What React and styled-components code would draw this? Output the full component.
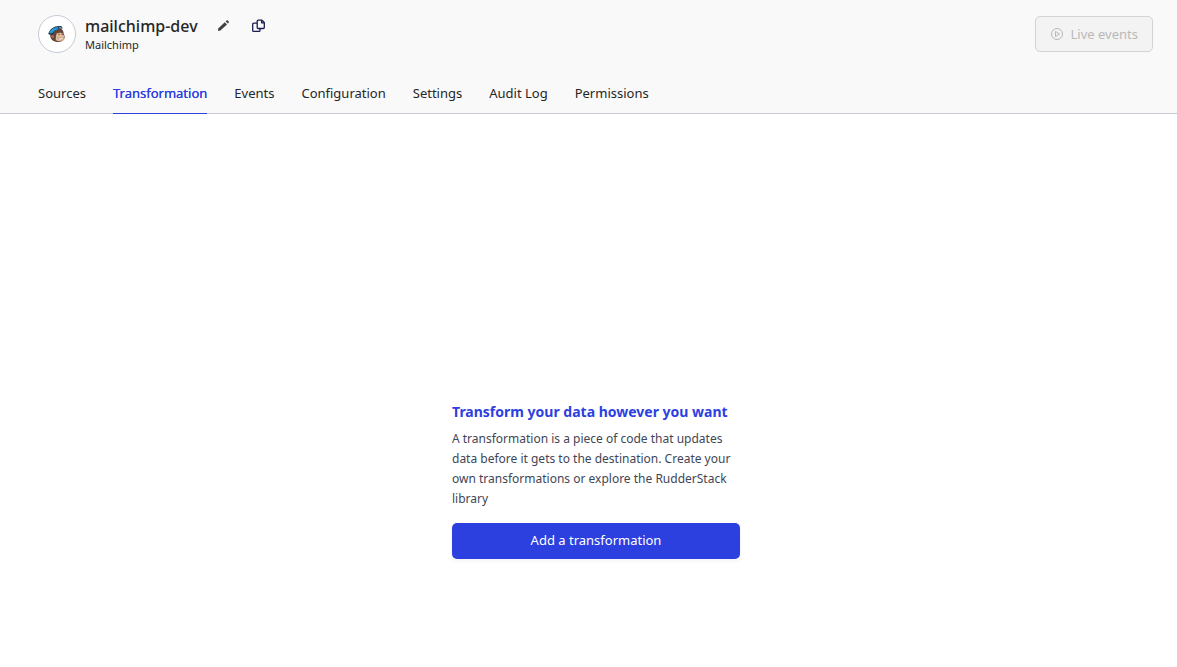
import React from "react";
import styled, { createGlobalStyle } from "styled-components";

const GlobalStyle = createGlobalStyle`
  *, *::before, *::after { box-sizing: border-box; }
  body {
    margin: 0;
    background: #ffffff;
    color: #262626;
    font-family: "Noto Sans", sans-serif;
  }
  button { font-family: inherit; }
`;

const Page = styled.div`
  min-height: 100vh;
  display: flex;
  flex-direction: column;
`;

const Header = styled.header`
  background: #f9f9f9;
  border-bottom: 1px solid #c4c9d2;
`;

const TitleBar = styled.div`
  display: flex;
  align-items: center;
  justify-content: space-between;
  padding: 15px 24px 0 38px;
`;

const Identity = styled.div`
  display: flex;
  align-items: center;
  gap: 9px;
`;

const Avatar = styled.div`
  width: 38px;
  height: 38px;
  display: flex;
  align-items: center;
  justify-content: center;
  background: #ffffff;
  border: 1px solid #c4cbd8;
  border-radius: 50%;
`;

const NameRow = styled.div`
  display: flex;
  align-items: center;
`;

const Name = styled.h1`
  margin: 0 19px 0 0;
  font-size: 16px;
  font-weight: 500;
  line-height: 22px;
`;

const Kind = styled.p`
  margin: 0;
  font-size: 11px;
  line-height: 16px;
`;

const IconButton = styled.button`
  display: flex;
  padding: 0;
  margin-right: 20px;
  border: 0;
  background: none;
  color: ${(p) => p.$color};
  cursor: pointer;
`;

const Button = styled.button`
  display: flex;
  align-items: center;
  justify-content: center;
  gap: 7px;
  height: 36px;
  padding: 0 14px;
  border-radius: 5px;
  font-size: 13px;
  line-height: 20px;
`;

const LiveButton = styled(Button)`
  border: 1px solid #d3d3d3;
  background: #f3f3f3;
  color: #b9b9b9;
`;

const PrimaryButton = styled(Button)`
  width: 100%;
  padding-bottom: 2px;
  border: 0;
  background: #2c3fdf;
  color: #ffffff;
  box-shadow: 0 2px 4px rgba(0, 0, 0, 0.06);
  cursor: pointer;
`;

const Tabs = styled.nav`
  display: flex;
  gap: 27px;
  margin-bottom: -1px;
  padding: 21px 38px 0;
`;

const Tab = styled.a`
  height: 40px;
  padding-top: 9px;
  border-bottom: 1px solid ${(p) => (p.$active ? "#2c3fdf" : "transparent")};
  color: ${(p) => (p.$active ? "#2c3fdf" : "#262626")};
  font-size: 13px;
  line-height: 20px;
  text-decoration: none;
  text-shadow: ${(p) => (p.$active ? "0 0 0.25px currentColor" : "none")};
`;

const Main = styled.main`
  flex: 1;
  display: flex;
  flex-direction: column;
  align-items: center;
  justify-content: flex-end;
  padding: 24px 0 108px 15px;
`;

const EmptyState = styled.section`
  width: 288px;
`;

const Heading = styled.h2`
  margin: 0 0 7px;
  color: #2c3fdf;
  font-size: 14px;
  font-weight: 700;
  line-height: 20px;
`;

const Description = styled.p`
  margin: 0 0 14px;
  color: #3f4656;
  font-size: 12px;
  line-height: 20px;
`;

const tabs = [
  "Sources",
  "Transformation",
  "Events",
  "Configuration",
  "Settings",
  "Audit Log",
  "Permissions",
];

const MailchimpLogo = () => (
  <svg width="18" height="18" viewBox="0 0 18 18" aria-hidden="true">
    <path d="M2.500 9C1.500 12 3.400 15.600 7 16.600c3.400 1.200 8.600.4 9.800-3.500.4-2-.8-3-1.100-4.600C15.400 5 13 2.600 9.400 3.200 6 3.800 4 5.800 2.500 9z" fill="#644539" />
    <path d="M9 8.200c1.700-.9 5.300-.7 5.900.7.4 1.300 2.200 2.500 1.900 4-.5 2.400-4.200 3.500-6.800 3.200-1.700-.3-2.900-1.800-2.200-3.200.6-1.300-.1-3.600 1.200-4.700z" fill="#e3bb9c" />
    <path d="M.3 8.700C1.600 3.800 6.500 .4 12.800 1c.9.100 1.600 1 1.800 2.600-4.400-.2-7.700 1.200-9.800 5.600C3.700 10 1.100 10 .3 8.700z" fill="#1f2f40" />
    <path d="M1.200 7.800C2.600 4.200 5.800 2 10 1.900l-.4 2.500C7.200 4.800 5.700 6 4.600 8c-.7.700-2.700.6-3.400-.2z" fill="#2998d5" />
    <path d="M10.800 1.900l2.300-.1.500 1.300-3 .3z" fill="#4f9fcc" />
    <circle cx="4.700" cy="11.600" r="1.400" fill="#a17358" />
    <path d="M10.900 8.700l.2 1.500M14 8.600l.2 1.400" stroke="#4a332a" strokeWidth=".9" />
    <path d="M9.800 12.600c1.900 1 4.100.6 6-.5-.3 2.100-2.200 3.100-3.800 2.900-1.200-.1-2-1.100-2.200-2.400z" fill="#fff5e9" stroke="#8a5a45" strokeWidth=".4" />
  </svg>
);

const PencilIcon = () => (
  <svg width="14" height="14" viewBox="0 0 14 14" fill="currentColor" aria-hidden="true">
    <path d="M1.200 9.500 7.800 3.200l2.200 2.200-6.600 6.200-2.300.3zM8.700 2.400l.9-.9c.4-.4.8-.4 1.200 0l.9.9c.4.4.4.8 0 1.200l-.9.900z" />
  </svg>
);

const CopyIcon = () => (
  <svg width="14" height="14" viewBox="0 0 14 14" fill="none" stroke="currentColor" strokeWidth="1.300" strokeLinejoin="round" aria-hidden="true">
    <path d="M7.200 1.100h3.700l2.400 2.400v5c0 .6-.4 1-1 1H7.200c-.6 0-1-.4-1-1V2.100c0-.6.4-1 1-1z" />
    <path d="M10.600 1.200v2.600h2.600M6 4.100H2.700c-.6 0-1 .4-1 1v6.300c0 .6.4 1 1 1H8c.6 0 1-.4 1-1V9.700" />
  </svg>
);

const PlayIcon = () => (
  <svg width="14" height="14" viewBox="0 0 14 14" fill="none" stroke="currentColor" strokeLinejoin="round" aria-hidden="true">
    <circle cx="7" cy="7" r="5.500" />
    <path d="M5.500 4.500v5L9.500 7z" />
  </svg>
);

export default function App() {
  return (
    <Page>
      <GlobalStyle />
      <Header>
        <TitleBar>
          <Identity>
            <Avatar>
              <MailchimpLogo />
            </Avatar>
            <div>
              <NameRow>
                <Name>mailchimp-dev</Name>
                <IconButton type="button" aria-label="Edit name" $color="#404040">
                  <PencilIcon />
                </IconButton>
                <IconButton type="button" aria-label="Copy" $color="#1b1b50">
                  <CopyIcon />
                </IconButton>
              </NameRow>
              <Kind>Mailchimp</Kind>
            </div>
          </Identity>
          <LiveButton type="button" disabled>
            <PlayIcon />
            Live events
          </LiveButton>
        </TitleBar>
        <Tabs aria-label="Destination">
          {tabs.map((tab) => {
            const active = tab === "Transformation";
            return (
              <Tab key={tab} href="#" $active={active} aria-current={active ? "page" : undefined}>
                {tab}
              </Tab>
            );
          })}
        </Tabs>
      </Header>
      <Main>
        <EmptyState>
          <Heading>Transform your data however you want</Heading>
          <Description>
            A transformation is a piece of code that updates data before it gets to the
            destination. Create your own transformations or explore the RudderStack library
          </Description>
          <PrimaryButton type="button">Add a transformation</PrimaryButton>
        </EmptyState>
      </Main>
    </Page>
  );
}
